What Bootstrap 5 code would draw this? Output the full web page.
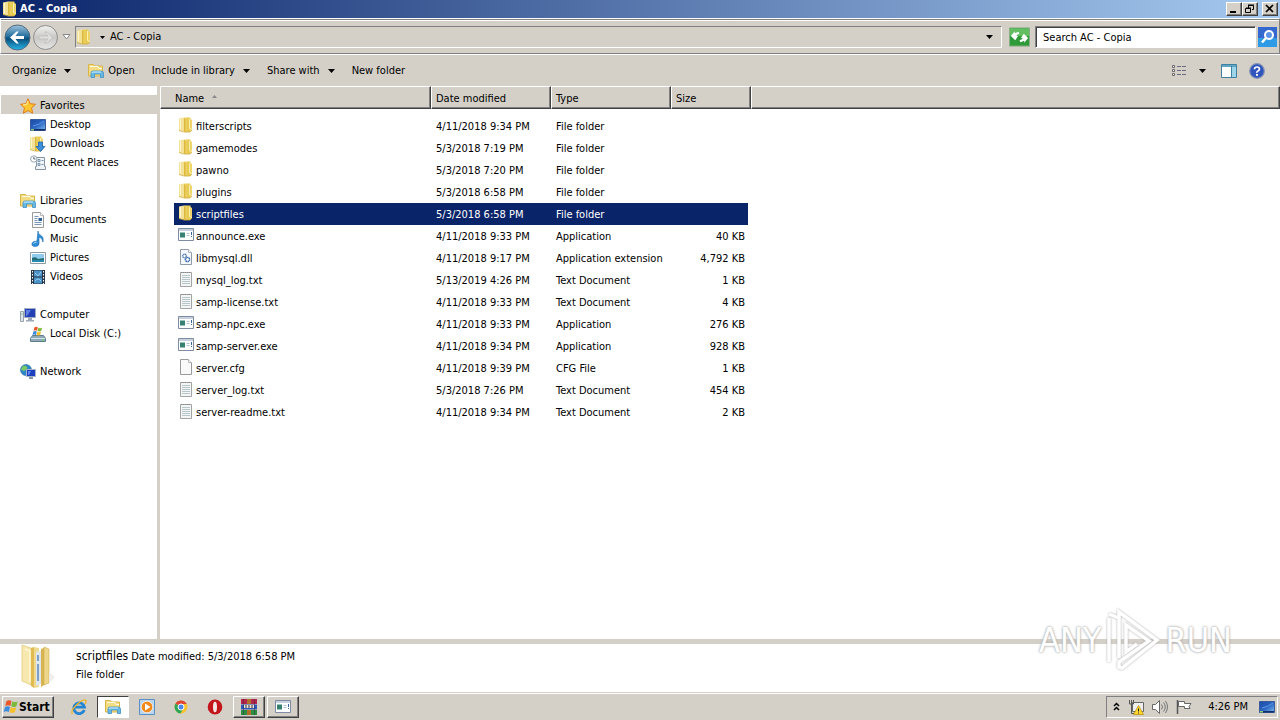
<!DOCTYPE html>
<html lang="en">
<head>
<meta charset="utf-8">
<meta name="viewport" content="width=device-width, initial-scale=1">
<title>AC - Copia</title>
<link rel="stylesheet" href="https://cdn.jsdelivr.net/npm/bootstrap@5.3.0/dist/css/bootstrap.min.css">
<style>
:root{--face:#d4d0c8;--navy:#0a246a;--shade:#808080;--dark:#404040}
body{font-family:"DejaVu Sans Condensed","DejaVu Sans",sans-serif;font-size:11px;line-height:14px;color:#000;background:#fff}
button{font:inherit;color:inherit;border:0;background:none;padding:0;text-align:left;white-space:nowrap}
a{color:inherit;text-decoration:none}
svg{display:block;flex:none}
.ico{width:16px;height:16px}
.face{background:var(--face)}
.raised{background:var(--face);border:1px solid;border-color:#fff var(--dark) var(--dark) #fff;box-shadow:inset -1px -1px var(--shade)}
.sunken{border:1px solid;border-color:var(--shade) #fff #fff var(--shade)}
.titlebar{height:18px;background:linear-gradient(90deg,#0a246a,#a6caf0);color:#fff;padding:0 2px}
.titlebar h1{font-size:11px;line-height:18px;font-weight:700;margin-left:2px}
.winbtn{width:16px;height:14px}
.winbtn svg{width:14px;height:12px}
.navband{height:36px;border:1px solid;border-color:#fff var(--shade) #808080 #fff;box-shadow:inset 0 1px var(--shade),inset 0 2px #fff;padding:2px 2px 0 3px}
.recent{margin:0 4px 0 3px}
.addr{height:22px}
.addr a{padding:0 0 0 1px}
.refresh{margin:0 5px 0 7px}
.search{height:22px;width:221px;border:1px solid;border-color:var(--shade) #fff #fff var(--shade);box-shadow:inset 1px 1px var(--dark);background:#fff;padding:0 7px;color:#000;border-radius:0}
.search::placeholder{color:#000;opacity:1}
.go{margin-left:2px}
.tools{height:32px;border-top:1px solid #fff;padding:0 15px 0 12px;gap:17px}
.viewarrow{padding:0 15px 0 12px}
.arrow{width:7px;height:4px}
.sidebar{width:160px;border-right:3px solid var(--face);padding-top:9px;flex:none}
.tree li{height:19px}
.tree a{display:flex;align-items:center;gap:4px;height:19px;padding:2px 0 0 20px;white-space:nowrap}
.tree .sub{padding-left:30px}
.tree .picked{background:var(--face);margin:0 -3px 0 1px;padding-left:19px}
.files{width:100%;table-layout:fixed;border-collapse:separate;border-spacing:0}
.files th{height:23px;padding:2px 4px 0;font-weight:400;background:var(--face);border:1px solid;border-color:#fff var(--dark) var(--dark) #fff;box-shadow:inset -1px -1px var(--shade);vertical-align:middle}
.files th:first-child{padding-left:14px}
.files tbody::before{content:"";display:block;height:6px}
.files tbody td{height:22px;padding:2px 0 0 5px;white-space:nowrap;vertical-align:middle;background-clip:padding-box}
.files tbody td:first-child{border-left:14px solid transparent;padding:2px 0 0 4px}
.files tbody td:nth-child(4){text-align:right;border-right:3px solid transparent;padding-right:3px}
.files .chosen td:not(:last-child){background-color:var(--navy);color:#fff}
.fname{display:flex;align-items:center;gap:2px;height:20px}
.fname svg{margin-bottom:4px}
.c-name{width:271px}.c-date,.c-type{width:120px}.c-size{width:80px}
.details{height:48px;border-top:5px solid var(--face);box-sizing:content-box;padding-left:16px;gap:16px}
.dtext{padding-top:5px}
.dname{font-size:12px}
.dline{gap:3px}
.taskbar{height:28px;border-top:1px solid var(--face);box-shadow:inset 0 1px #fff;padding:3px 2px 2px}
.start{width:52px;height:22px;font-weight:700;font-size:12px}
.tasks{margin-left:9px;gap:2px}
.task{width:32px;height:22px}
.task.on{background:#fff;border:1px solid;border-color:var(--dark) #fff #fff var(--dark)}
.tray{height:22px;padding:0 2px 0 6px}
.clock{margin:0 11px 0 16px}
.mark-any{position:absolute;right:48px;bottom:48px;gap:4px;pointer-events:none;color:#fff;font:34px/64px "Liberation Sans Narrow","DejaVu Sans Condensed",sans-serif;text-shadow:0 0 3px #aaa,0 0 2px #bbb}
.mark-any svg{width:56px;height:64px;filter:drop-shadow(0 0 1px #aaa)}
</style>
<script src="https://cdn.jsdelivr.net/npm/bootstrap@5.3.0/dist/js/bootstrap.bundle.min.js"></script>
</head>
<body>
<svg width="0" height="0" class="position-absolute" aria-hidden="true">
<defs>
<linearGradient id="gFold" x1="0" x2="1"><stop offset="0" stop-color="#f3dd7c"/><stop offset=".5" stop-color="#e6c84d"/><stop offset="1" stop-color="#f0d873"/></linearGradient>
<linearGradient id="gBack" x1="0" x2="0" y1="0" y2="1"><stop offset="0" stop-color="#9fc4dd"/><stop offset=".45" stop-color="#24709f"/><stop offset=".55" stop-color="#0b4f7d"/><stop offset="1" stop-color="#27b5e8"/></linearGradient>
<linearGradient id="gFwd" x1="0" x2="0" y1="0" y2="1"><stop offset="0" stop-color="#f2f2f0"/><stop offset=".5" stop-color="#c9c8c6"/><stop offset="1" stop-color="#e6e6e4"/></linearGradient>
<linearGradient id="gScr" x1="0" x2="1" y1="0" y2="1"><stop offset="0" stop-color="#1e4aa0"/><stop offset=".5" stop-color="#2b63c2"/><stop offset="1" stop-color="#7fc0f0"/></linearGradient>
<symbol id="folder" viewBox="0 0 16 16"><path d="M1 1.500L6 .5v14l-5-1z" fill="#f3e295"/><path d="M6 .5h6.500v1.500L14 3v10l-2 2H6z" fill="url(#gFold)"/><path d="M6 1l1.500 1v13L6 14.500z" fill="#dcb83c"/><path d="M11.500 2v9.500l2.500 1" fill="none" stroke="#fdf0b0"/><path d="M2.500 2v10.500" stroke="#fcf5cf"/><path d="M1 13.500l5 1.500h6l2-2" fill="none" stroke="#cfa93a" stroke-width=".8"/></symbol>
<symbol id="lib" viewBox="0 0 16 16"><path d="M.5 1.500h5l1 1.500h8v10H.5z" fill="#f3dc82" stroke="#d8b548"/><path d="M2 3.500h8l1 2h3" stroke="#fffbe0" fill="none"/><path d="M3 14.500V10q0-2 2-2h8q2.500 0 2.500 2v4.500h-3V11h-6v3.500z" fill="#69b9e4" stroke="#3d8fc4" stroke-width=".8"/><path d="M4 10q0-1 1-1h8" stroke="#d4f1ff" fill="none"/></symbol>
<symbol id="page" viewBox="0 0 16 16"><path d="M2.500 .5h8l3 3v12h-11z" fill="#fafafa" stroke="#9a9a9a"/><path d="M10.500 .5v3h3" fill="#fff" stroke="#b8b8b8"/></symbol>
<symbol id="txt" viewBox="0 0 16 16"><path d="M2.500 1.500h11v14h-11z" fill="#f4f6f6" stroke="#a3a3a3"/><path d="M3 1.500h10" stroke="#888" stroke-dasharray="1 1"/><path d="M4 4.500h8M4 6.500h8M4 8.500h8M4 10.500h8M4 12.500h8" stroke="#b7c6ca"/></symbol>
<symbol id="exe" viewBox="0 0 16 16"><path d="M.5 1.500h15v12H.5z" fill="#fff" stroke="#7f8ba3"/><path d="M1 2h14v2H1z" fill="#c8d2dc"/><path d="M2 5.500h5v5H2z" fill="#35806f"/><path d="M8.500 6.500h3M8.500 8.500h3" stroke="#b2c3d6"/><path d="M13.500 5v3M13.500 9v1" stroke="#3a64a0"/></symbol>
<symbol id="dll" viewBox="0 0 16 16"><path d="M2.500 .5h8l3 3v12h-11z" fill="#f5f9fd" stroke="#8f9aa8"/><path d="M10.500 .5v3h3" fill="#fff" stroke="#a9b4c0"/><circle cx="6.500" cy="7" r="1.800" fill="#fff" stroke="#4a78b4" stroke-width="1.300" stroke-dasharray="1.200 .4"/><circle cx="9.500" cy="10.500" r="2.100" fill="#fff" stroke="#3768a8" stroke-width="1.500" stroke-dasharray="1.300 .4"/></symbol>
<symbol id="desk" viewBox="0 0 16 16"><path d="M.5 2.500h15v11H.5z" fill="url(#gScr)" stroke="#3c5b9a"/><path d="M1 12h14v1.500H1z" fill="#12306c"/><path d="M1 12h3v1.500H1z" fill="#8ed070"/><path d="M3 9q6-1 11-5" stroke="#5f9be4" fill="none"/></symbol>
<symbol id="arr" viewBox="0 0 7 4"><path d="M0 0h7L3.500 4z"/></symbol>
<symbol id="win" viewBox="0 0 16 16"><path d="M3.500 2Q6 .5 8.500 2L7.300 7Q5 5.700 2.200 7z" fill="#e8562a"/><path d="M9.300 2.400Q12 3.800 14.700 2.400L13.400 7.300Q11 8.500 8.100 7.300z" fill="#7db93a"/><path d="M2 7.900q2.600-1.200 5 0L5.800 13Q3.400 11.500.7 13z" fill="#3a8ddb"/><path d="M7.800 8.200q2.800 1.400 5.400.1L11.900 13.200Q9 14.500 6.600 13.200z" fill="#f5c02c"/></symbol>
</defs>
</svg>
<div class="d-flex flex-column min-vh-100">
<header class="face">
  <div class="titlebar d-flex align-items-center">
    <svg class="ico"><use href="#folder"/></svg>
    <h1 class="mb-0 flex-grow-1">AC - Copia</h1>
    <button class="winbtn raised" aria-label="Minimize"><svg viewBox="0 0 14 12"><path d="M3 8h6v2H3z"/></svg></button>
    <button class="winbtn raised" aria-label="Restore"><svg viewBox="0 0 14 12"><path d="M5.500 2v3M5 2h6M5 2.500h5.500v4H9M3 5h5M2.500 5.500h5v4h-5z" fill="none" stroke="#000"/></svg></button>
    <button class="winbtn raised ms-1" aria-label="Close"><svg viewBox="0 0 14 12"><path d="M3 2l7 7M10 2L3 9" stroke="#000" stroke-width="1.700"/></svg></button>
  </div>
  <div class="navband d-flex align-items-center">
    <button aria-label="Back"><svg width="27" height="27" viewBox="0 0 27 27"><circle cx="13.500" cy="13.500" r="12.500" fill="url(#gBack)" stroke="#51697c"/><path d="M6 13.500l6.500-6h2.300l-3.300 4.500H20v3h-8.500l3.300 4.500h-2.300z" fill="#fff"/></svg></button>
    <button aria-label="Forward"><svg width="28" height="27" viewBox="0 0 28 27"><circle cx="14.500" cy="13.500" r="12" fill="url(#gFwd)" stroke="#8d8d8d"/><path d="M22 13.500l-6-5.500h-2.500l3.500 4H8v3h9l-3.500 4H16z" fill="#dededc" stroke="#b9b9b7" stroke-width=".7"/></svg></button>
    <button class="recent" aria-label="Recent pages"><svg width="9" height="6" viewBox="0 0 9 6"><path d="M1 .5h7L4.500 5z" fill="#fff" stroke="#888"/></svg></button>
    <div class="addr sunken d-flex align-items-center flex-grow-1">
      <svg class="ico"><use href="#folder"/></svg>
      <svg width="5" height="3" viewBox="0 0 7 4" class="ms-2 me-1"><use href="#arr"/></svg>
      <a href="#" class="flex-grow-1">AC - Copia</a>
      <button class="px-2" aria-label="Previous locations"><svg class="arrow"><use href="#arr"/></svg></button>
    </div>
    <button class="refresh" aria-label="Refresh"><svg width="21" height="20" viewBox="0 0 22 20"><path d="M.5 .5h21v19H.5z" fill="#2f9a3a" stroke="#8cae88"/><path d="M1 1h20v8H1z" fill="#63bd61"/><path d="M10 4.500L6 6.200V4L2 9l4.500 4.500L9.500 9 8 9V8l3-1.500zM12 15.500l4-1.700V16l4-5-4.500-4.500L12.500 11l1.500 0v1l-3 1.500z" fill="#fff"/></svg></button>
    <input class="search" type="text" placeholder="Search AC - Copia" aria-label="Search AC - Copia">
    <button class="go" aria-label="Search"><svg width="19" height="20" viewBox="0 0 19 20"><path d="M0 0h19v20H0z" fill="#3568cf"/><path d="M0 11h19v9H0z" fill="#2f9be6"/><circle cx="11" cy="8" r="4" fill="#5b93e6" stroke="#fff" stroke-width="2"/><path d="M8 11l-4 4.500" stroke="#fff" stroke-width="2.500"/></svg></button>
  </div>
  <div class="tools d-flex align-items-center">
    <button class="d-flex align-items-center gap-2">Organize<svg class="arrow"><use href="#arr"/></svg></button>
    <button class="d-flex align-items-center gap-1"><svg class="ico"><use href="#lib"/></svg>Open</button>
    <button class="d-flex align-items-center gap-2">Include in library<svg class="arrow"><use href="#arr"/></svg></button>
    <button class="d-flex align-items-center gap-2">Share with<svg class="arrow"><use href="#arr"/></svg></button>
    <button>New folder</button>
    <div class="d-flex align-items-center ms-auto">
      <button aria-label="Change your view"><svg class="ico" viewBox="0 0 16 16"><path d="M1.500 2.500h2v2h-2zM1.500 6.500h2v2h-2zM1.500 10.500h2v2h-2z" fill="#fff" stroke="#666"/><path d="M6 3.500h4M11 3.500h4M6 7.500h4M11 7.500h4M6 11.500h4M11 11.500h4" stroke="#666b80"/></svg></button>
      <button class="viewarrow" aria-label="More view options"><svg class="arrow"><use href="#arr"/></svg></button>
      <button class="me-2" aria-label="Preview pane"><svg class="ico" viewBox="0 0 16 16"><path d="M.5 1.500h15v13H.5z" fill="#fff" stroke="#3f7f9f"/><path d="M1 2h14v2H1z" fill="#5fa6c4"/><path d="M10 4h5v10h-5z" fill="#9ed4ea"/><path d="M10.500 3v11" stroke="#3f7f9f"/></svg></button>
      <button class="ms-1" aria-label="Help"><svg class="ico" viewBox="0 0 16 16"><circle cx="8" cy="8" r="7.300" fill="#2f55bd" stroke="#8592b5" stroke-width="1.200"/><path d="M5.500 6.300Q5.500 4 8 4t2.500 2.100Q10.500 7.300 9 8T8 9.800" fill="none" stroke="#fff" stroke-width="1.700"/><path d="M7 11h2v1.800H7z" fill="#fff"/></svg></button>
    </div>
  </div>
</header>
<div class="d-flex flex-grow-1">
  <nav class="sidebar" aria-label="Folders">
    <ul class="tree list-unstyled mb-0">
      <li><a href="#" class="picked"><svg class="ico" viewBox="0 0 16 16"><path d="M8 .8l2.200 4.900 5.300.6-4 3.600 1.200 5.300L8 12.500l-4.700 2.700 1.200-5.300-4-3.600 5.300-.6z" fill="#fbc62f" stroke="#e07b18"/><path d="M8 3L6.500 6.500 3 7" stroke="#fff2a8" fill="none"/></svg>Favorites</a></li>
      <li><a href="#" class="sub"><svg class="ico"><use href="#desk"/></svg>Desktop</a></li>
      <li><a href="#" class="sub"><svg class="ico" viewBox="0 0 16 16"><use href="#folder" x="-1" width="16" height="16"/><path d="M8.500 6h4v4.500H15L10.500 15.500 6 10.500h2.500z" fill="#3b8fdd" stroke="#1b62ae" stroke-width=".8"/></svg>Downloads</a></li>
      <li><a href="#" class="sub"><svg class="ico" viewBox="0 0 16 16"><path d="M5.500 2.500h9v9h1v3h-10v-3h1v-5z" fill="#f1f4f6" stroke="#8494a0"/><path d="M8 4.500h2v2H8zM11.500 5.500h2M8 8.500h2v2H8zM11.500 9.500h2" stroke="#7592ad" fill="none"/><circle cx="3.800" cy="4" r="3.200" fill="#fff" stroke="#94a4af"/><path d="M3.800 2v2h1.700" stroke="#567" fill="none"/></svg>Recent Places</a></li>
      <li></li>
      <li><a href="#"><svg class="ico"><use href="#lib"/></svg>Libraries</a></li>
      <li><a href="#" class="sub"><svg class="ico" viewBox="0 0 16 16"><use href="#page" width="16" height="16"/><path d="M4.500 4.500h4M4.500 6.500h3M4.500 10.500h7M4.500 12.500h7M4.500 8.500h3" stroke="#7b96b4"/><path d="M8.500 6h3.500v3H8.500z" fill="#2d5f9d"/></svg>Documents</a></li>
      <li><a href="#" class="sub"><svg class="ico" viewBox="0 0 16 16"><path d="M8 0q0 3 3 4.500t2 6.500q-.5-4-4-5v6.500q0 3-3.800 3T2 12.500Q2.500 10 7 10z" fill="#2d8fd9" stroke="#1767a8" stroke-width=".6"/><path d="M3.500 12.500q1-1.500 3-1.300" stroke="#b9e3fb" fill="none"/></svg>Music</a></li>
      <li><a href="#" class="sub"><svg class="ico" viewBox="0 0 16 16"><path d="M.5 2.500h15v11H.5z" fill="#fff" stroke="#8c9aa5"/><path d="M2 4h12v8H2z" fill="#8ecbec"/><path d="M2 8q4-2 6 1l6-1v4H2z" fill="#236b74"/><path d="M2 10h12v2H2z" fill="#2b88ad"/></svg>Pictures</a></li>
      <li><a href="#" class="sub"><svg class="ico" viewBox="0 0 16 16"><path d="M1 1h14v14H1z" fill="#27364a"/><path d="M4 1.500h8v6H4zM4 8.500h8v6H4z" fill="#4b93c8"/><path d="M5 4l3 3 3-4M5 12q3-4 6 0" stroke="#9ad4f2" fill="none"/><path d="M2.500 2v13M13.500 2v13" stroke="#fff" stroke-dasharray="1.500 1.500"/></svg>Videos</a></li>
      <li></li>
      <li><a href="#"><svg class="ico" viewBox="0 0 16 16"><path d="M.5 4.500h3v10h-3z" fill="#dfe5ea" stroke="#97a2ab"/><path d="M1.500 7h1" stroke="#4a4"/><path d="M4.500 1.500h11v9h-11z" fill="#2340b5" stroke="#a3adc4"/><path d="M6 3h5l-4 6H6z" fill="#5f7fe4"/><path d="M8 11h4v2H8zM6 13h8v1.500H6z" fill="#9ba9b6"/></svg>Computer</a></li>
      <li><a href="#" class="sub"><svg class="ico" viewBox="0 0 16 16"><path d="M2.500 9.500h11l2 3v3H.5v-3z" fill="#8fa9b6" stroke="#5f7d8c"/><path d="M1 12.500h14" stroke="#d5e3ea"/><path d="M12 14h2" stroke="#5d5"/><use href="#win" x="2" width="11" height="11"/></svg>Local Disk (C:)</a></li>
      <li></li>
      <li><a href="#"><svg class="ico" viewBox="0 0 16 16"><circle cx="6" cy="6" r="5.500" fill="#2e87c8" stroke="#276a9c" stroke-width=".6"/><path d="M3 2q3-1 4 1T4 7Q1 6 1 5zM7 8l3-2 1 2-3 3z" fill="#7ccb62"/><path d="M6.500 5.500h9v7h-9z" fill="#1c3fc0" stroke="#a9b5ca"/><path d="M8 7h3l-2 4H8z" fill="#5f86ee"/><path d="M9 13h4v2H9z" fill="#8797a5"/></svg>Network</a></li>
    </ul>
  </nav>
  <main class="flex-grow-1">
    <table class="files">
      <thead><tr>
        <th class="c-name" scope="col" aria-sort="ascending"><button class="d-flex align-items-center">Name<svg class="ms-2 mb-1" width="5" height="3" viewBox="0 0 5 3"><path d="M0 3h5L2.500 0z" fill="#888"/></svg></button></th>
        <th class="c-date" scope="col"><button>Date modified</button></th><th class="c-type" scope="col"><button>Type</button></th><th class="c-size" scope="col"><button>Size</button></th><th></th>
      </tr></thead>
      <tbody>
      <tr><td><div class="fname"><svg class="ico"><use href="#folder"/></svg>filterscripts</div></td><td>4/11/2018 9:34 PM</td><td>File folder</td><td></td><td></td></tr>
      <tr><td><div class="fname"><svg class="ico"><use href="#folder"/></svg>gamemodes</div></td><td>5/3/2018 7:19 PM</td><td>File folder</td><td></td><td></td></tr>
      <tr><td><div class="fname"><svg class="ico"><use href="#folder"/></svg>pawno</div></td><td>5/3/2018 7:20 PM</td><td>File folder</td><td></td><td></td></tr>
      <tr><td><div class="fname"><svg class="ico"><use href="#folder"/></svg>plugins</div></td><td>5/3/2018 6:58 PM</td><td>File folder</td><td></td><td></td></tr>
      <tr class="chosen"><td><div class="fname"><svg class="ico"><use href="#folder"/></svg>scriptfiles</div></td><td>5/3/2018 6:58 PM</td><td>File folder</td><td></td><td></td></tr>
      <tr><td><div class="fname"><svg class="ico"><use href="#exe"/></svg>announce.exe</div></td><td>4/11/2018 9:33 PM</td><td>Application</td><td>40 KB</td><td></td></tr>
      <tr><td><div class="fname"><svg class="ico"><use href="#dll"/></svg>libmysql.dll</div></td><td>4/11/2018 9:17 PM</td><td>Application extension</td><td>4,792 KB</td><td></td></tr>
      <tr><td><div class="fname"><svg class="ico"><use href="#txt"/></svg>mysql_log.txt</div></td><td>5/13/2019 4:26 PM</td><td>Text Document</td><td>1 KB</td><td></td></tr>
      <tr><td><div class="fname"><svg class="ico"><use href="#txt"/></svg>samp-license.txt</div></td><td>4/11/2018 9:33 PM</td><td>Text Document</td><td>4 KB</td><td></td></tr>
      <tr><td><div class="fname"><svg class="ico"><use href="#exe"/></svg>samp-npc.exe</div></td><td>4/11/2018 9:33 PM</td><td>Application</td><td>276 KB</td><td></td></tr>
      <tr><td><div class="fname"><svg class="ico"><use href="#exe"/></svg>samp-server.exe</div></td><td>4/11/2018 9:34 PM</td><td>Application</td><td>928 KB</td><td></td></tr>
      <tr><td><div class="fname"><svg class="ico"><use href="#page"/></svg>server.cfg</div></td><td>4/11/2018 9:39 PM</td><td>CFG File</td><td>1 KB</td><td></td></tr>
      <tr><td><div class="fname"><svg class="ico"><use href="#txt"/></svg>server_log.txt</div></td><td>5/3/2018 7:26 PM</td><td>Text Document</td><td>454 KB</td><td></td></tr>
      <tr><td><div class="fname"><svg class="ico"><use href="#txt"/></svg>server-readme.txt</div></td><td>4/11/2018 9:34 PM</td><td>Text Document</td><td>2 KB</td><td></td></tr>
      </tbody>
    </table>
  </main>
</div>
<section class="details d-flex">
  <svg width="44" height="46" viewBox="0 0 44 46"><path d="M6 1l9 3v37l-9-4z" fill="#f6e8ae" stroke="#e0c777" stroke-width=".7"/><path d="M9 5l5 2v31" stroke="#fff8d6" fill="none" stroke-width="1.500"/><path d="M15 4l3-1v41l-3-2z" fill="#e0bb54"/><path d="M18 3l5 1v39l-5 1z" fill="#efd98e"/><path d="M20 8l5-1v33l-5 2z" fill="#dfe7ee"/><path d="M22 11v6M22 20v17" stroke="#7f9fc8" stroke-width="2"/><path d="M25 5l3-1v37l-3 2z" fill="#d8b550"/><path d="M28 3l5 2v34l-5 2z" fill="#eed78a" stroke="#cfab4a" stroke-width=".6"/><path d="M33 28l6 5-6 6z" fill="#efeeea"/></svg>
  <div class="dtext">
    <div class="dline d-flex align-items-baseline"><span class="dname">scriptfiles</span><span>Date modified:</span><span>5/3/2018 6:58 PM</span></div>
    <div class="pt-1">File folder</div>
  </div>
</section>
<footer class="taskbar face d-flex align-items-center">
  <button class="start raised d-flex align-items-center"><svg class="ico"><use href="#win"/></svg>Start</button>
  <div class="tasks d-flex">
    <button class="task d-flex align-items-center justify-content-center" aria-label="Internet Explorer"><svg class="ico" viewBox="0 0 16 16"><path d="M13.300 11A5.400 5.400 0 1 1 13.500 8.200H4" fill="none" stroke="#2585d0" stroke-width="2.800"/><path d="M1.500 15Q-1 12 6 5.500T15 1.500Q15.500 3 14 5" fill="none" stroke="#efb52a" stroke-width="1.300"/></svg></button>
    <button class="task on d-flex align-items-center justify-content-center" aria-label="Windows Explorer"><svg class="ico"><use href="#lib"/></svg></button>
    <button class="task d-flex align-items-center justify-content-center" aria-label="Media Player"><svg class="ico" viewBox="0 0 16 16"><path d="M.5 .5h15v15H.5z" fill="#b9d6ee" stroke="#5b8fc2"/><circle cx="8" cy="8" r="5.800" fill="#f08a1d" stroke="#fff" stroke-width=".7"/><path d="M6 4.500L11.500 8 6 11.500z" fill="#fff"/></svg></button>
    <button class="task d-flex align-items-center justify-content-center" aria-label="Chrome"><svg class="ico" viewBox="0 0 16 16"><circle cx="8" cy="8" r="6.500" fill="#f5c430"/><path d="M8 8L2.400 4.800A6.500 6.500 0 0 1 13.700 5H8z" fill="#df4437"/><path d="M8 8L2.400 4.800A6.500 6.500 0 0 0 7.500 14.500L10.500 9z" fill="#2fa556"/><circle cx="8" cy="8" r="3" fill="#4a87ee" stroke="#fff"/></svg></button>
    <button class="task d-flex align-items-center justify-content-center" aria-label="Opera"><svg class="ico" viewBox="0 0 16 16"><ellipse cx="8" cy="8" rx="7.300" ry="7.500" fill="#c3161c"/><ellipse cx="8" cy="8" rx="2" ry="5.300" fill="#f6e6e6"/></svg></button>
    <button class="task raised d-flex align-items-center justify-content-center" aria-label="WinRAR"><svg class="ico" viewBox="0 0 16 16"><path d="M0 0h16v5H0z" fill="#b3264c"/><path d="M0 5.500h16v5H0z" fill="#3257b5"/><path d="M0 11h16v5H0z" fill="#2f8c45"/><path d="M6 0h4v5H6zM6 11h4v5H6z" fill="#b0702c"/><path d="M3 6h10v3H3z" fill="#e8e4dc"/><path d="M5 6v3M8 6v3M11 6v3" stroke="#3b2a30"/><path d="M2.500 0v16M13.500 0v16" stroke="#1d1830" stroke-opacity=".35"/></svg></button>
    <button class="task raised d-flex align-items-center justify-content-center" aria-label="Console"><svg class="ico"><use href="#exe"/></svg></button>
  </div>
  <div class="tray sunken d-flex align-items-center ms-auto">
    <button aria-label="Show hidden icons"><svg width="7" height="10" viewBox="0 0 7 10"><path d="M1 4l2.500-2.500L6 4M1 8l2.500-2.500L6 8" fill="none" stroke="#000" stroke-width="1.500"/></svg></button>
    <svg class="ico ms-2" viewBox="0 0 16 16"><path d="M4.500 3.500h11v9h-11z" fill="#eee" stroke="#666"/><path d="M1.500 1v4h4V1M3.500 1v13.500h6" fill="none" stroke="#555"/><path d="M10.500 6.500l5 9h-10z" fill="#ffd930" stroke="#b58c00" stroke-width=".7"/><path d="M10.500 9.500v3M10.500 13.500v1" stroke="#222"/></svg>
    <svg class="ico ms-2" viewBox="0 0 16 16"><path d="M.5 5.500h3l4-4v13l-4-4h-3z" fill="#fff" stroke="#666"/><path d="M9.500 5.500q2 2.500 0 5M11.500 3.500q3.500 4.500 0 9M13.500 2q4 6 0 12" fill="none" stroke="#777"/></svg>
    <svg class="ico ms-2" viewBox="0 0 16 16"><path d="M1.500 1v14" stroke="#555" stroke-width="1.500"/><path d="M2.500 2.500h6v2h6.500l-2 3 1 2H8.500v-2h-6z" fill="#fff" stroke="#666"/></svg>
    <time class="clock" datetime="16:26">4:26 PM</time>
    <svg class="ico"><use href="#desk"/></svg>
  </div>
</footer>
</div>
<div class="mark-any d-flex" aria-hidden="true"><span>ANY</span>
<svg viewBox="0 0 56 64"><path d="M4 54V10M4 6L14 10M14 50V4L52 32 17 60 14 59V54L44 33 21 17V44L32 36" fill="none" stroke="#fff" stroke-width="3.500"/></svg>
<span>RUN</span></div>
</body>
</html>
